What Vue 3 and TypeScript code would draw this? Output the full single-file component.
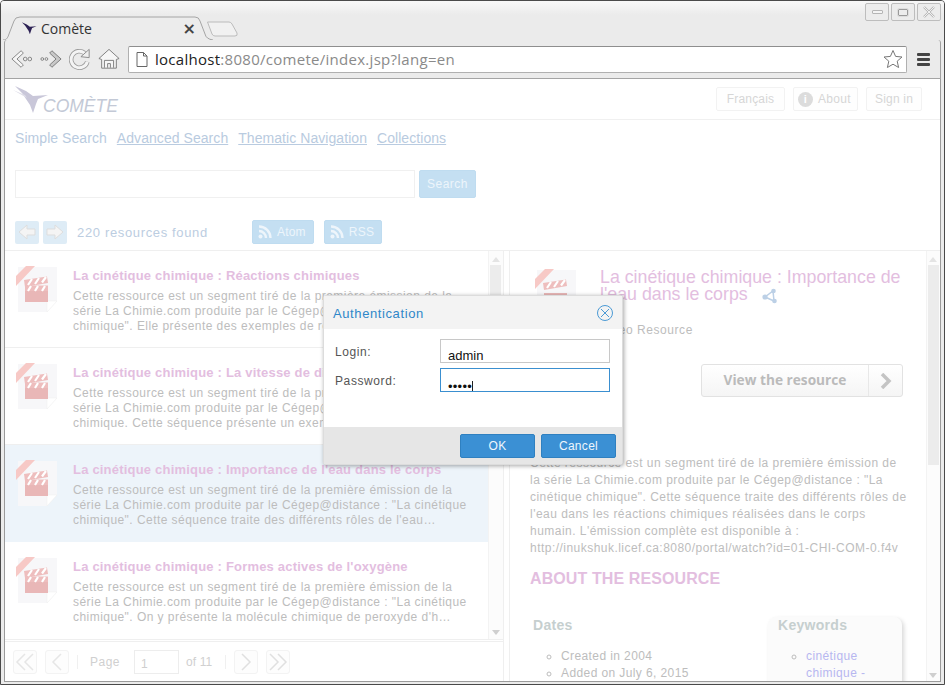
<template>
  <div class="window">
    <div class="titlebar">
      <div class="tab">
        <svg class="tab-shape" viewBox="0 0 210 24" width="210" height="24">
          <path d="M0 24 C4 24 5 21 6 18 L11 5 Q12 1 17 1 H192 Q196 1 197 5 L202 18 Q203 23 210 24 Z" fill="#ececec" />
          <path d="M0 24 C4 24 5 21 6 18 L11 5 Q12 1 17 1 H192 Q196 1 197 5 L202 18 Q203 23 210 24" fill="none" stroke="#a4a4a4" />
        </svg>
        <svg class="favicon" viewBox="0 0 36 30" width="16" height="15">
          <path d="M2 1 L13 6 L20 11 L35 10 L25 14 L23 19 L20 28 L17 20 L9 8 Z" fill="#2d2255" />
        </svg>
        <span class="tab-title">Comète</span>
        <span class="tab-close">×</span>
      </div>
      <svg class="new-tab" viewBox="0 0 33 16" width="33" height="16">
        <path d="M1.500 1 H23 Q25 1 26 3 L31 12 Q32 15 29 15 H9 Q7 15 6 13 Z" fill="#f1f1f1" stroke="#bbb" />
      </svg>
      <div class="win-buttons">
        <span class="win-btn"><i class="min"></i></span>
        <span class="win-btn"><i class="max"></i></span>
        <span class="win-btn">
          <svg viewBox="0 0 14 14" width="14" height="14">
            <path d="M2 2 L12 12 M12 2 L2 12" stroke="#b8b8b8" stroke-width="2.400" fill="none" />
            <path d="M2 2 L12 12 M12 2 L2 12" stroke="#f0f0f0" stroke-width="1" fill="none" />
          </svg>
        </span>
      </div>
    </div>

    <div class="toolbar">
      <svg class="tool-icon" viewBox="0 0 24 24" width="22" height="22">
        <path d="M11 3 L1 12 L11 21 L13.500 18.500 L6.500 12 L13.500 5.500 Z" fill="#f6f6f6" stroke="#808080" />
        <circle cx="15.500" cy="12" r="2" fill="none" stroke="#808080" />
        <circle cx="20.500" cy="12" r="2" fill="none" stroke="#808080" />
      </svg>
      <svg class="tool-icon" viewBox="0 0 24 24" width="22" height="22">
        <circle cx="2.500" cy="12" r="1.500" fill="none" stroke="#808080" />
        <circle cx="7" cy="12" r="1.500" fill="none" stroke="#808080" />
        <path d="M13 3 L23 12 L13 21 L10.500 18.500 L17.500 12 L10.500 5.500 Z" fill="#c8c8c8" stroke="#777" />
      </svg>
      <svg class="tool-icon" viewBox="0 0 24 24" width="22" height="22">
        <path d="M20 15 A9 9 0 1 1 17 5.500" fill="none" stroke="#9a9a9a" stroke-width="5" />
        <path d="M20 15 A9 9 0 1 1 17 5.500" fill="none" stroke="#f4f4f4" stroke-width="3.200" />
        <path d="M13 9.500 L22 10.500 L22 1.500 Z" fill="#efefef" stroke="#888" />
      </svg>
      <svg class="tool-icon" viewBox="0 0 24 24" width="22" height="22">
        <path d="M12 1.500 L23 11.500 L20 12.500 L20 22 L4 22 L4 12.500 L1 11.500 Z" fill="#f6f6f6" stroke="#777" />
        <path d="M7 21.500 L7 13.500 L17 13.500 L17 21.500 M10.500 21.500 L10.500 17 L13.500 17 L13.500 21.500" fill="none" stroke="#777" />
      </svg>
      <div class="omnibox">
        <svg class="page-icon" viewBox="0 0 12 15" width="12" height="15">
          <path d="M1 .5 H7.500 L11 4 V14.500 H1 Z M7.500 .5 V4 H11" fill="#fff" stroke="#666" />
        </svg>
        <span class="url"><b>localhost</b>:8080/comete/index.jsp?lang=en</span>
        <svg class="star" viewBox="0 0 20 20" width="20" height="20">
          <path d="M10 1.500 L12.600 7.400 L19 8 L14.200 12.200 L15.600 18.500 L10 15.200 L4.400 18.500 L5.800 12.200 L1 8 L7.400 7.400 Z" fill="#fff" stroke="#777" />
        </svg>
      </div>
      <div class="menu-icon"><i></i><i></i><i></i></div>
    </div>

    <div class="page">
      <header class="site-header">
        <div class="logo">
          <svg viewBox="0 0 36 30" width="36" height="30">
            <path d="M2 1 L13 6 L20 11 L35 10 L25 14 L23 19 L20 28 L17 20 L9 8 Z" fill="#c9c7d9" />
            <path d="M0 5 L12 10 L14 13 Z" fill="#dedde8" />
          </svg>
          <span class="logo-text">COMÈTE</span>
        </div>
        <div class="header-actions">
          <button class="ghost-btn lang">Français</button>
          <button class="ghost-btn about"><span class="info-dot">i</span>About</button>
          <button class="ghost-btn sign">Sign in</button>
        </div>
      </header>

      <nav class="search-nav">
        <a class="current">Simple Search</a>
        <a>Advanced Search</a>
        <a>Thematic Navigation</a>
        <a>Collections</a>
      </nav>

      <div class="search-row">
        <div class="search-input"></div>
        <button class="search-btn">Search</button>
      </div>

      <div class="results-bar">
        <span class="arrow-btn">
          <svg viewBox="0 0 18 16" width="18" height="16"><path d="M1 8 L9 1 V5 H17 V11 H9 V15 Z" fill="#f4f4f4" stroke="#ddd" /></svg>
        </span>
        <span class="arrow-btn">
          <svg viewBox="0 0 18 16" width="18" height="16"><path d="M17 8 L9 1 V5 H1 V11 H9 V15 Z" fill="#f4f4f4" stroke="#ddd" /></svg>
        </span>
        <span class="found">220 resources found</span>
        <button class="feed-btn">
          <svg viewBox="0 0 14 14" width="14" height="14"><circle cx="2.500" cy="11.500" r="2" fill="#eef5fb" /><path d="M1 6 A7 7 0 0 1 8 13 M1 1.500 A11.500 11.500 0 0 1 12.500 13" fill="none" stroke="#eef5fb" stroke-width="2.400" /></svg>
          Atom
        </button>
        <button class="feed-btn">
          <svg viewBox="0 0 14 14" width="14" height="14"><circle cx="2.500" cy="11.500" r="2" fill="#eef5fb" /><path d="M1 6 A7 7 0 0 1 8 13 M1 1.500 A11.500 11.500 0 0 1 12.500 13" fill="none" stroke="#eef5fb" stroke-width="2.400" /></svg>
          RSS
        </button>
      </div>

      <div class="panes">
        <section class="left-pane">
          <div class="list-scroll">
            <ul class="result-list">
              <li v-for="item in results" :key="item.title" class="result" :class="{ selected: item.selected }">
                <svg class="video-icon" viewBox="0 0 44 48" width="44" height="48">
                  <path d="M3 1 H42 V35 L32 46 H3 Z" fill="#f7f7f9" />
                  <path d="M32 46 L42 35 H32 Z" fill="#fff" stroke="#ececec" stroke-width=".5" />
                  <path d="M1 20 V10 L11 0 H20 Z" fill="#f7c9c6" />
                  <path d="M10 24 H33 V36 H10 Z" fill="#e9b7b7" />
                  <path d="M9 14 L32 10.500 L33 17 L10 21 Z" fill="#eebebe" />
                  <path d="M10 19.500 H33 V25 H10 Z" fill="#eebebe" />
                  <path d="M13 19 L17 13 M20 18 L24 12 M27 16.500 L31 11 M13 25 L16 20 M20 25 L23 20 M27 25 L30 20" stroke="#fff" stroke-width="2.200" />
                </svg>
                <div class="result-body">
                  <h3>{{ item.title }}</h3>
                  <p>{{ item.text }}</p>
                </div>
              </li>
            </ul>
            <div class="scrollbar list-bar">
              <i class="up"></i>
              <span class="thumb"></span>
              <i class="down"></i>
            </div>
          </div>
          <div class="pager">
            <span class="page-btn"><svg viewBox="0 0 20 20" width="20" height="20"><path d="M10 2 L2 10 L10 18 M18 2 L10 10 L18 18" fill="none" stroke="#e6e6e6" stroke-width="1.500" /></svg></span>
            <span class="page-btn"><svg viewBox="0 0 20 20" width="20" height="20"><path d="M14 2 L6 10 L14 18" fill="none" stroke="#e6e6e6" stroke-width="1.500" /></svg></span>
            <span class="pager-sep"></span>
            <span class="pager-label">Page</span>
            <span class="page-input">1</span>
            <span class="pager-label of">of 11</span>
            <span class="pager-sep last"></span>
            <span class="page-btn"><svg viewBox="0 0 20 20" width="20" height="20"><path d="M6 2 L14 10 L6 18" fill="none" stroke="#e0e0e0" stroke-width="1.500" /></svg></span>
            <span class="page-btn"><svg viewBox="0 0 20 20" width="20" height="20"><path d="M2 2 L10 10 L2 18 M10 2 L18 10 L10 18" fill="none" stroke="#e0e0e0" stroke-width="1.500" /></svg></span>
          </div>
        </section>

        <section class="right-pane">
          <div class="detail">
            <div class="detail-head">
              <svg class="video-icon" viewBox="0 0 44 48" width="44" height="48">
                <path d="M3 1 H42 V35 L32 46 H3 Z" fill="#f7f7f9" />
                <path d="M1 20 V10 L11 0 H20 Z" fill="#f7c9c6" />
                <path d="M10 24 H33 V36 H10 Z" fill="#e9b7b7" />
                <path d="M9 14 L32 10.500 L33 17 L10 21 Z" fill="#eebebe" />
                <path d="M13 19 L17 13 M20 18 L24 12 M27 16.500 L31 11" stroke="#fff" stroke-width="2.200" />
              </svg>
              <h2>
                La cinétique chimique : Importance de l'eau dans le corps
                <svg class="share" viewBox="0 0 16 16" width="16" height="16">
                  <path d="M3 9 L11 3 L12 13 Z" fill="none" stroke="#bcd0e6" stroke-width="1.500" />
                  <circle cx="3" cy="9" r="2.600" fill="#bcd0e6" />
                  <circle cx="11.500" cy="3" r="2.300" fill="#bcd0e6" />
                  <circle cx="12.500" cy="13" r="2.300" fill="#bcd0e6" />
                </svg>
              </h2>
            </div>
            <div class="media-type">Video Resource</div>
            <div class="view-row">
              <button class="view-btn">
                <span class="view-label">View the resource</span>
                <span class="view-arrow">
                  <svg viewBox="0 0 12 16" width="12" height="16"><path d="M2 1 L9 8 L2 15" fill="none" stroke="#c4c4c4" stroke-width="3.500" /></svg>
                </span>
              </button>
            </div>
            <p class="description">Cette ressource est un segment tiré de la première émission de la série La Chimie.com produite par le Cégep@distance : "La cinétique chimique". Cette séquence traite des différents rôles de l'eau dans les réactions chimiques réalisées dans le corps humain. L'émission complète est disponible à : http://inukshuk.licef.ca:8080/portal/watch?id=01-CHI-COM-0.f4v</p>
            <h4 class="about-title">ABOUT THE RESOURCE</h4>
            <div class="about-cols">
              <div class="dates">
                <h5>Dates</h5>
                <ul>
                  <li>Created in 2004</li>
                  <li>Added on July 6, 2015</li>
                </ul>
              </div>
              <div class="keywords">
                <h5>Keywords</h5>
                <ul>
                  <li><a>cinétique chimique -</a></li>
                </ul>
              </div>
            </div>
          </div>
          <div class="scrollbar detail-bar">
            <i class="up"></i>
            <span class="thumb"></span>
            <i class="down"></i>
          </div>
        </section>
      </div>

      <div class="modal">
        <div class="modal-head">
          <span>Authentication</span>
          <svg viewBox="0 0 18 18" width="18" height="18">
            <circle cx="9" cy="9" r="7.500" fill="none" stroke="#4b9ad5" />
            <path d="M5 5 L13 13 M13 5 L5 13" stroke="#4b9ad5" />
          </svg>
        </div>
        <div class="modal-body">
          <div class="field">
            <label>Login:</label>
            <div class="text-field">admin</div>
          </div>
          <div class="field">
            <label>Password:</label>
            <div class="text-field focus"><span class="dots">•••••</span><i class="caret"></i></div>
          </div>
        </div>
        <div class="modal-foot">
          <button>OK</button>
          <button>Cancel</button>
        </div>
      </div>
    </div>
  </div>
</template>

<script setup lang="ts">
interface ResultItem {
  title: string;
  text: string;
  selected?: boolean;
}

const results: ResultItem[] = [
  {
    title: 'La cinétique chimique : Réactions chimiques',
    text: 'Cette ressource est un segment tiré de la première émission de la série La Chimie.com produite par le Cégep@distance : "La cinétique chimique". Elle présente des exemples de réactions chimiques…',
  },
  {
    title: 'La cinétique chimique : La vitesse de diverses réactions',
    text: 'Cette ressource est un segment tiré de la première émission de la série La Chimie.com produite par le Cégep@distance : "La cinétique chimique. Cette séquence présente un exemple de vitesses…',
  },
  {
    title: "La cinétique chimique : Importance de l'eau dans le corps",
    text: 'Cette ressource est un segment tiré de la première émission de la série La Chimie.com produite par le Cégep@distance : "La cinétique chimique". Cette séquence traite des différents rôles de l\'eau…',
    selected: true,
  },
  {
    title: "La cinétique chimique : Formes actives de l'oxygène",
    text: 'Cette ressource est un segment tiré de la première émission de la série La Chimie.com produite par le Cégep@distance : "La cinétique chimique". On y présente la molécule chimique de peroxyde d\'h…',
  },
];
</script>

<style>
html,
body {
  margin: 0;
  overflow: hidden;
}
</style>

<style scoped>
.window {
  position: relative;
  width: 945px;
  height: 685px;
  box-sizing: border-box;
  display: flex;
  flex-direction: column;
  padding-bottom: 2px;
  background: #ebebeb;
  border: 1px solid #4a4a4a;
  border-radius: 4px 4px 0 0;
  font-family: 'Liberation Sans', Arial, sans-serif;
  overflow: hidden;
}

.titlebar {
  position: relative;
  height: 39px;
  flex: none;
  display: flex;
  align-items: flex-end;
  padding-left: 2px;
  background: linear-gradient(#f8f8f8, #ebebeb 14px);
}

.tab {
  position: relative;
  z-index: 1;
  width: 210px;
  height: 24px;
  box-sizing: border-box;
  display: flex;
  align-items: center;
  padding: 0 17px 0 18px;
}

.tab-shape {
  position: absolute;
  left: 0;
  top: 0;
}

.favicon,
.tab-title,
.tab-close {
  position: relative;
}

.favicon {
  flex: none;
}

.tab-title {
  margin-left: 4px;
  flex: 1;
  font: 14px 'Open Sans', 'DejaVu Sans', sans-serif;
  color: #333;
}

.tab-close {
  font: bold 16px 'DejaVu Sans', sans-serif;
  color: #444;
}

.new-tab {
  flex: none;
  margin: 0 0 3px -7px;
}

.win-buttons {
  position: absolute;
  top: 2px;
  right: 3px;
  display: flex;
  gap: 2px;
}

.win-btn {
  width: 24px;
  height: 18px;
  box-sizing: border-box;
  display: flex;
  align-items: center;
  justify-content: center;
  border: 1px solid #bdbdbd;
  border-radius: 2px;
  background: #ececec;
}

.win-btn .min {
  width: 9px;
  height: 2px;
  border: 1px solid #b5b5b5;
  border-radius: 1px;
  background: #f4f4f4;
}

.win-btn .max {
  width: 8px;
  height: 5px;
  border: 1px solid #9a9a9a;
  outline: 1px solid #ddd;
  border-radius: 1px;
}

.toolbar {
  height: 39px;
  flex: none;
  box-sizing: border-box;
  display: flex;
  align-items: center;
  gap: 7px;
  padding: 0 10px 0 6px;
  margin: 0 3px;
  background: #ebebeb;
  border-left: 1px solid #a0a0a0;
  border-right: 1px solid #a0a0a0;
  border-bottom: 1px solid #a4a4a4;
  border-radius: 3px 3px 0 0;
}

.tool-icon {
  flex: none;
}

.omnibox {
  flex: 1;
  height: 27px;
  margin: 0 3px 0 1px;
  box-sizing: border-box;
  display: flex;
  align-items: center;
  padding: 0 3px 0 7px;
  background: #fff;
  border: 1px solid #b0b0b0;
  border-top-color: #8e8e8e;
  border-radius: 2px;
}

.page-icon {
  flex: none;
}

.url {
  flex: 1;
  margin-left: 7px;
  font: 15px 'Open Sans', 'DejaVu Sans', sans-serif;
  letter-spacing: .28px;
  color: #8a8a8a;
  white-space: nowrap;
}

.url b {
  font-weight: 400;
  color: #222;
}

.menu-icon {
  width: 13px;
  display: flex;
  flex-direction: column;
  gap: 2px;
}

.menu-icon i {
  height: 3px;
  border-radius: 1px;
  background: #444;
}

.page {
  position: relative;
  flex: 1;
  min-height: 0;
  margin: 0 3px;
  box-sizing: border-box;
  display: flex;
  flex-direction: column;
  background: #fff;
  border-left: 1px solid #9a9a9a;
  border-right: 1px solid #9a9a9a;
  border-bottom: 1px solid #9a9a9a;
}

.site-header {
  height: 41px;
  flex: none;
  box-sizing: border-box;
  display: flex;
  justify-content: space-between;
  align-items: flex-start;
  padding: 0 18px 0 8px;
  border-bottom: 1px solid #f0f0f0;
}

.logo {
  display: flex;
  align-items: flex-start;
  padding-top: 6px;
}

.logo-text {
  margin: 11px 0 0 -6px;
  font: italic 17.500px 'Liberation Sans', sans-serif;
  color: #c3c9d6;
}

.header-actions {
  display: flex;
  gap: 8px;
  padding-top: 8px;
}

.ghost-btn {
  height: 24px;
  box-sizing: border-box;
  padding: 0;
  display: flex;
  align-items: center;
  justify-content: center;
  font: 12px 'Liberation Sans', sans-serif;
  letter-spacing: .2px;
  color: #d6d6d6;
  background: #fefefe;
  border: 1px solid #f2f2f2;
  border-radius: 2px;
}

.ghost-btn.lang {
  width: 69px;
}

.ghost-btn.sign {
  width: 56px;
}

.ghost-btn.about {
  width: 65px;
  justify-content: flex-start;
  padding-left: 4px;
  letter-spacing: .3px;
}

.info-dot {
  width: 15px;
  height: 15px;
  margin-right: 5px;
  border-radius: 50%;
  background: #dcdcdc;
  color: #fff;
  font: bold 11px/15px 'Liberation Sans', sans-serif;
  text-align: center;
}

.search-nav {
  flex: none;
  display: flex;
  gap: 10px;
  padding: 9px 0 0 10px;
  font-size: 14px;
  line-height: 18px;
  letter-spacing: .06px;
  color: #b9cbe0;
}

.search-nav a {
  text-decoration: underline;
}

.search-nav a.current {
  text-decoration: none;
}

.search-row {
  flex: none;
  display: flex;
  gap: 4px;
  padding: 23px 0 0 10px;
}

.search-input {
  width: 400px;
  height: 28px;
  box-sizing: border-box;
  background: #fff;
  border: 1px solid #f0f0f0;
}

.search-btn {
  width: 57px;
  height: 28px;
  padding: 0;
  font: 12px 'Liberation Sans', sans-serif;
  letter-spacing: .5px;
  color: #edf5fb;
  background: #c4dff2;
  border: 1px solid #bfdcf0;
  border-radius: 2px;
}

.results-bar {
  flex: none;
  height: 24px;
  display: flex;
  align-items: center;
  padding: 22px 0 0 10px;
}

.arrow-btn {
  width: 24px;
  height: 23px;
  margin-right: 4px;
  display: flex;
  align-items: center;
  justify-content: center;
  background: #deecf6;
  border-radius: 2px;
}

.found {
  width: 175px;
  margin-left: 6px;
  font-size: 13px;
  letter-spacing: .65px;
  color: #bccde1;
}

.feed-btn {
  height: 24px;
  box-sizing: border-box;
  margin-right: 10px;
  padding: 0 7px 0 5px;
  display: flex;
  align-items: center;
  gap: 5px;
  font: 12px 'Liberation Sans', sans-serif;
  letter-spacing: .2px;
  color: #edf5fb;
  background: #c4dff2;
  border: 1px solid #bfdcf0;
  border-radius: 2px;
}

.panes {
  flex: 1;
  min-height: 0;
  margin-top: 6px;
  display: flex;
  border-top: 1px solid #efefef;
}

.left-pane {
  width: 499px;
  flex: none;
  box-sizing: border-box;
  display: flex;
  flex-direction: column;
  border-right: 1px solid #efefef;
}

.list-scroll {
  flex: 1;
  min-height: 0;
  display: flex;
  margin-bottom: 1px;
  border-bottom: 1px solid #efefef;
}

.result-list {
  flex: 1;
  min-width: 0;
  margin: 0;
  padding: 0;
  list-style: none;
}

.result {
  height: 97px;
  box-sizing: border-box;
  display: flex;
  padding: 15px 10px 0 10px;
  border-bottom: 1px solid #efefef;
}

.result:last-child {
  border-bottom: none;
}

.result.selected {
  background: #edf4fa;
  border-bottom: none;
}

.video-icon {
  flex: none;
}

.result-body {
  margin-left: 14px;
  min-width: 0;
}

.result-body h3 {
  margin: 1px 0 4px;
  font-size: 13px;
  line-height: 18px;
  letter-spacing: .2px;
  color: #e3bedf;
  white-space: nowrap;
}

.result-body p {
  margin: 0;
  font-size: 12px;
  line-height: 15px;
  letter-spacing: .45px;
  color: #bdbdbd;
}

.scrollbar {
  position: relative;
  flex: none;
  background: #fcfcfc;
  border-left: 1px solid #f3f3f3;
}

.scrollbar .thumb {
  position: absolute;
  background: #ececec;
}

.scrollbar .up,
.scrollbar .down {
  position: absolute;
  border-left: 4px solid transparent;
  border-right: 4px solid transparent;
}

.scrollbar .up {
  top: 6px;
  border-bottom: 5px solid #e4e4e4;
}

.scrollbar .down {
  bottom: 4px;
  border-top: 5px solid #cfcfcf;
}

.list-bar {
  width: 15px;
  box-sizing: border-box;
}

.list-bar .thumb {
  top: 14px;
  left: 1px;
  width: 11px;
  height: 60px;
}

.list-bar .up,
.list-bar .down {
  left: 3px;
}

.pager {
  height: 40px;
  flex: none;
  box-sizing: border-box;
  display: flex;
  align-items: center;
  padding: 0 0 0 8px;
  border-top: 1px solid #efefef;
}

.page-btn {
  width: 24px;
  height: 24px;
  box-sizing: border-box;
  margin-right: 8px;
  display: flex;
  align-items: center;
  justify-content: center;
  background: #fdfdfd;
  border: 1px solid #f3f3f3;
  border-radius: 3px;
}

.pager-sep {
  width: 1px;
  height: 14px;
  margin-right: 12px;
  background: #f0f0f0;
}

.pager-sep.last {
  margin-right: 8px;
}

.pager-label {
  margin-right: 14px;
  font-size: 12px;
  letter-spacing: .5px;
  color: #d0d0d0;
}

.pager-label.of {
  margin-right: 13px;
  letter-spacing: .1px;
}

.page-input {
  width: 45px;
  height: 24px;
  box-sizing: border-box;
  margin-right: 7px;
  padding: 6px 0 0 6px;
  font-size: 12px;
  color: #cfcfcf;
  border: 1px solid #ededed;
}

.right-pane {
  flex: 1;
  min-width: 0;
  display: flex;
  overflow: hidden;
  margin-left: 5px;
  border-left: 1px solid #efefef;
}

.detail {
  flex: 1;
  min-width: 0;
  overflow: hidden;
  box-sizing: border-box;
  padding: 18px 0 0 20px;
}

.detail-head {
  display: flex;
  gap: 22px;
  height: 54px;
  padding-left: 4px;
}

.detail-head h2 {
  margin: 0;
  width: 316px;
  font-size: 17.800px;
  line-height: 17px;
  font-weight: 400;
  color: #e3bedf;
}

.share {
  vertical-align: -4px;
  margin-left: 9px;
}

.media-type {
  padding-left: 70px;
  font-size: 12px;
  line-height: 14px;
  letter-spacing: .55px;
  color: #bdbdbd;
}

.view-row {
  display: flex;
  justify-content: flex-end;
  padding: 27px 23px 0 0;
}

.view-btn {
  width: 202px;
  height: 33px;
  box-sizing: border-box;
  padding: 0;
  display: flex;
  background: linear-gradient(#fff, #f5f5f5);
  border: 1px solid #e2e2e2;
  border-radius: 3px;
}

.view-label {
  flex: 1;
  font: bold 13.700px/30px 'Open Sans', 'DejaVu Sans', sans-serif;
  color: #bbb;
}

.view-arrow {
  width: 33px;
  height: 31px;
  display: flex;
  align-items: center;
  justify-content: center;
  border-left: 1px solid #e8e8e8;
}

.description {
  width: 377px;
  margin: 58px 0 0;
  font-size: 12px;
  line-height: 17px;
  letter-spacing: .47px;
  color: #bdbdbd;
}

.about-title {
  margin: 13px 0 0;
  font-size: 16px;
  line-height: 18px;
  letter-spacing: .1px;
  color: #e3bedf;
}

.about-cols {
  display: flex;
  margin-top: 28px;
  padding-left: 3px;
}

.dates {
  width: 235px;
}

.about-cols h5 {
  margin: 0;
  font-size: 14px;
  line-height: 18px;
  letter-spacing: .3px;
  color: #c6cfcf;
}

.about-cols ul {
  margin: 14px 0 0;
  padding-left: 28px;
  list-style: circle;
  font-size: 12px;
  line-height: 17px;
  letter-spacing: .4px;
  color: #bdbdbd;
}

.keywords {
  width: 134px;
  height: 100px;
  flex: none;
  box-sizing: border-box;
  margin-top: 1px;
  padding: 0 10px;
  background: #fbfbfb;
  border-radius: 8px;
  box-shadow: 2px 2px 4px #d8d8d8;
}

.keywords h5 {
  line-height: 16px;
}

.keywords ul {
  margin-top: 15px;
}

.keywords a {
  color: #b7b7f0;
}

.detail-bar {
  width: 14px;
  box-sizing: border-box;
}

.detail-bar .thumb {
  top: 14px;
  left: 1px;
  width: 11px;
  height: 200px;
}

.detail-bar .up,
.detail-bar .down {
  left: 2px;
}

.detail-bar .down {
  bottom: 3px;
}

.modal {
  position: absolute;
  left: 318px;
  top: 216px;
  width: 300px;
  height: 170px;
  box-sizing: border-box;
  display: flex;
  flex-direction: column;
  background: #fff;
  border: 1px solid #dcdcdc;
  border-radius: 3px;
  box-shadow: 1px 1px 4px rgba(0, 0, 0, .35);
}

.modal-head {
  height: 33px;
  flex: none;
  box-sizing: border-box;
  display: flex;
  justify-content: space-between;
  align-items: center;
  padding: 1px 8px 0 9px;
  font-size: 13px;
  letter-spacing: .6px;
  color: #2f87c9;
  background: #f3f3f3;
}

.modal-body {
  flex: 1;
  padding: 10px 12px 0 11px;
}

.field {
  display: flex;
  align-items: center;
  margin-bottom: 5px;
}

.field label {
  width: 105px;
  margin-top: 2px;
  font-size: 12px;
  letter-spacing: .6px;
  color: #555;
}

.text-field {
  position: relative;
  width: 170px;
  height: 24px;
  box-sizing: border-box;
  padding: 8px 0 0 7px;
  font: 13px/15px 'Liberation Sans', sans-serif;
  color: #111;
  border: 1px solid #c8c8c8;
}

.text-field.focus {
  border-color: #3a8fd0;
  display: flex;
}

.dots {
  margin-top: 2px;
  letter-spacing: .25px;
}

.caret {
  width: 1px;
  height: 10px;
  margin-top: 4px;
  background: #222;
}

.modal-foot {
  height: 37px;
  flex: none;
  box-sizing: border-box;
  display: flex;
  justify-content: flex-end;
  align-items: center;
  gap: 6px;
  padding-right: 6px;
  background: #e6e6e6;
}

.modal-foot button {
  width: 75px;
  height: 24px;
  padding: 0;
  font: 12px 'Liberation Sans', sans-serif;
  letter-spacing: .3px;
  color: #eef6fc;
  background: #3b90d4;
  border: 1px solid #2f80c0;
  border-radius: 2px;
}
</style>
